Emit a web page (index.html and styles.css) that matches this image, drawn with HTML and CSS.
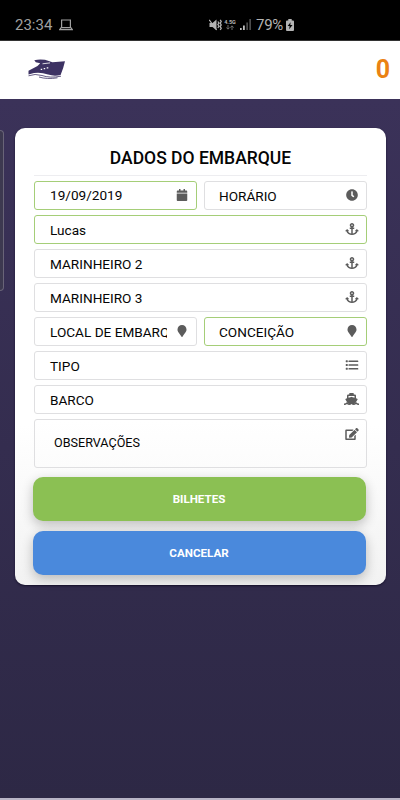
FILE: index.html
```html
<!DOCTYPE html>
<html lang="pt-BR">
<head>
<meta charset="utf-8">
<title>Dados do embarque</title>
<meta name="viewport" content="width=device-width">
<link rel="stylesheet" href="styles.css">
</head>
<body>
<svg class="defs" aria-hidden="true">
  <symbol id="calendar" viewBox="0 0 448 512"><path d="M12 192h424c6.600 0 12 5.400 12 12v260c0 26.500-21.500 48-48 48H48c-26.500 0-48-21.500-48-48V204c0-6.600 5.400-12 12-12zm436-44v-36c0-26.500-21.500-48-48-48h-48V12c0-6.600-5.400-12-12-12h-40c-6.600 0-12 5.400-12 12v52H160V12c0-6.600-5.400-12-12-12h-40c-6.600 0-12 5.400-12 12v52H48C21.500 64 0 85.500 0 112v36c0 6.600 5.400 12 12 12h424c6.600 0 12-5.400 12-12z"/></symbol>
  <symbol id="clock" viewBox="0 0 512 512"><path d="M256,8C119,8,8,119,8,256S119,504,256,504,504,393,504,256,393,8,256,8Zm92.490,313h0l-20,25a16,16,0,0,1-22.490,2.500h0l-67-49.720a40,40,0,0,1-15-31.230V112a16,16,0,0,1,16-16h32a16,16,0,0,1,16,16V256l58,42.500A16,16,0,0,1,348.490,321Z"/></symbol>
  <symbol id="anchor" viewBox="0 0 576 512"><path d="M12.971 352h32.394C67.172 454.735 181.944 512 288 512c106.229 0 220.853-57.380 242.635-160h32.394c10.691 0 16.045-12.926 8.485-20.485l-67.029-67.029c-4.686-4.686-12.284-4.686-16.971 0l-67.029 67.029c-7.560 7.560-2.206 20.485 8.485 20.485h35.146c-20.290 54.317-84.963 86.588-144.117 94.015V256h52c6.627 0 12-5.373 12-12v-40c0-6.627-5.373-12-12-12h-52v-5.470c37.281-13.226 63.989-48.771 63.989-90.530C384 43.023 341.123.1 288.200.001 235.098-.098 192 42.921 192 96.001c0 41.757 26.718 77.302 64 90.529V192h-52c-6.627 0-12 5.373-12 12v40c0 6.627 5.373 12 12 12h52v190.015c-58.936-7.399-123.820-39.679-144.117-94.015h35.146c10.691 0 16.045-12.926 8.485-20.485l-67.029-67.029c-4.686-4.686-12.284-4.686-16.971 0L4.485 331.515C-3.074 339.074 2.280 352 12.971 352zM288 64c17.645 0 32 14.355 32 32s-14.355 32-32 32-32-14.355-32-32 14.355-32 32-32z"/></symbol>
  <symbol id="marker" viewBox="0 0 384 512"><path d="M172.268 501.670C26.970 291.031 0 269.413 0 192 0 85.961 85.961 0 192 0s192 85.961 192 192c0 77.413-26.970 99.031-172.268 309.670-9.535 13.774-29.930 13.773-39.464 0z"/></symbol>
  <symbol id="list" viewBox="0 0 576 512"><path d="M36 56h56q16 0 16 16v48q0 16-16 16H36q-16 0-16-16V72q0-16 16-16zm0 160h56q16 0 16 16v48q0 16-16 16H36q-16 0-16-16v-48q0-16 16-16zm0 160h56q16 0 16 16v48q0 16-16 16H36q-16 0-16-16v-48q0-16 16-16zM154 64h386q16 0 16 16v32q0 16-16 16H154q-16 0-16-16V80q0-16 16-16zm0 160h386q16 0 16 16v32q0 16-16 16H154q-16 0-16-16v-32q0-16 16-16zm0 160h386q16 0 16 16v32q0 16-16 16H154q-16 0-16-16v-32q0-16 16-16z"/></symbol>
  <symbol id="ship" viewBox="0 0 640 512"><path fill-rule="evenodd" d="M224 24q0-24 24-24h144q24 0 24 24v40h48q48 0 48 48v112l52 17q35 15 10 48L480 440q-80 50-160 30-80 20-160-30L66 289q-25-33 10-48l52-17V112q0-48 48-48h48zM192 128v76l114-38q14-4 28 0l114 38v-76z"/><path d="M0 448h16c38 0 69-17 91-44 10-12 31-11 40 1 44 57 124 57 161 1 8-9 18-9 26 0 38 56 117 56 161-1 9-12 30-13 40-1 22 27 53 44 89 44h16v64h-16c-48 0-83-17-109-38-58 49-133 49-195 0-62 49-137 49-195 0-26 21-61 38-109 38H0z"/></symbol>
  <symbol id="edit" viewBox="0 0 576 512"><path d="M402.600 83.200l90.200 90.200c3.800 3.800 3.800 10 0 13.800L274.400 405.600l-92.800 10.300c-12.400 1.400-22.900-9.100-21.500-21.500l10.300-92.800L388.800 83.200c3.800-3.800 10-3.800 13.800 0zm162-22.900l-48.800-48.800c-15.200-15.200-39.900-15.200-55.200 0l-35.400 35.400c-3.800 3.800-3.800 10 0 13.800l90.200 90.200c3.800 3.800 10 3.800 13.800 0l35.400-35.400c15.200-15.300 15.200-40 0-55.200zM384 346.200V448H64V128h229.800c3.200 0 6.200-1.300 8.500-3.500l40-40c7.600-7.600 2.200-20.500-8.500-20.500H48C21.500 64 0 85.500 0 112v352c0 26.500 21.500 48 48 48h352c26.500 0 48-21.500 48-48V306.200c0-10.700-12.900-16-20.500-8.500l-40 40c-2.200 2.300-3.500 5.300-3.500 8.500z"/></symbol>
</svg>

<div class="status">
  <span class="time">23:34</span>
  <svg class="laptop" viewBox="0 0 14 12"><path d="M2.600 8.500V1h8.800v7.500M.7 10.600h12.600l-1.500-2H2.200z" fill="none" stroke="currentColor" stroke-width="1.200"/></svg>
  <svg class="mute" viewBox="0 0 13 12"><path d="M.5 4h3L7.500.5v10.800L3.500 8H.5z" fill="currentColor"/><path d="M.2.800 7.600 11" stroke="currentColor" stroke-width="1.200"/><path d="m8.900 2.500 1 1.500-1 1.500 1 1.500-1 2M11.200.8l1 1.700-1 1.700 1 1.700-1 1.700 1 1.700-1 1.500" fill="none" stroke="currentColor" stroke-width="1.300"/></svg>
  <span class="net"><b>4.5G</b>
    <svg class="updown" viewBox="0 0 8 5"><path d="M2 0v4M.4 2.500 2 4.200l1.600-1.700M6 5V1M4.400 2.600 6 .8l1.600 1.800" fill="none" stroke="currentColor" stroke-width=".9"/></svg>
  </span>
  <svg class="signal" viewBox="0 0 12 11"><path d="M0 9h1.700v2H0zM3 6.500h1.800V11H3z" fill="#c0c0c0"/><path d="M6.300 3.500H8V11H6.300zM9.300 0H11v11H9.300z" fill="#4c4c4c"/></svg>
  <span class="percent">79%</span>
  <svg class="battery" viewBox="0 0 8 12"><path d="M2.300 0h3.400v1.500H7q1 0 1 1V11q0 1-1 1H1q-1 0-1-1V2.500q0-1 1-1h1.300z" fill="currentColor"/><path d="M4.600 3.200 1.600 7h2L3.200 10.200 6.500 6H4.300z" fill="#000"/></svg>
</div>

<header class="topbar">
  <svg class="boat" viewBox="0 0 37 20"><path fill="#3d3263" d="M.5 15.500V11.800L9.500 7 12.200 4.200 7.800 3.200 6.300 1.300Q11-.2 17 .8L24.500 3.300 37 2.200Q35.500 9 32.600 16 26 17.500 20 15.500 13 13 6 14z"/><path d="M.5 16.800Q7 14.300 14 16.500 22 19.300 33 17.200M11 18Q19 20.500 29.500 18.800" fill="none" stroke="#3d3263" stroke-width=".8"/><path d="m14.500 4.800 7.500-.9" stroke="#fff" stroke-width=".8"/><path d="M12.700 10.400h1.500m1.500-.8h1.500m1.500-.8h1.600" stroke="#fff" stroke-width="1.300"/></svg>
  <span class="count">0</span>
</header>

<main class="screen">
  <div class="edge-handle"></div>
  <section class="card">
    <h1>DADOS DO EMBARQUE</h1>
    <div class="form">
      <div class="field valid date"><span>19/09/2019</span><svg><use href="#calendar"/></svg></div>
      <div class="field right"><span>HORÁRIO</span><svg><use href="#clock"/></svg></div>
      <div class="field wide valid"><span>Lucas</span><svg><use href="#anchor"/></svg></div>
      <div class="field wide"><span>MARINHEIRO 2</span><svg><use href="#anchor"/></svg></div>
      <div class="field wide"><span>MARINHEIRO 3</span><svg><use href="#anchor"/></svg></div>
      <div class="field"><span class="clip">LOCAL DE EMBARQ</span><svg><use href="#marker"/></svg></div>
      <div class="field valid right"><span>CONCEIÇÃO</span><svg><use href="#marker"/></svg></div>
      <div class="field wide"><span>TIPO</span><svg><use href="#list"/></svg></div>
      <div class="field wide"><span>BARCO</span><svg class="ship"><use href="#ship"/></svg></div>
      <div class="field wide notes"><span>OBSERVAÇÕES</span><svg><use href="#edit"/></svg></div>
    </div>
    <div class="actions">
      <button class="green">BILHETES</button>
      <button class="blue">CANCELAR</button>
    </div>
  </section>
</main>
</body>
</html>
```
FILE: styles.css
```css
* { box-sizing: border-box; }

body {
  margin: 0;
  height: 800px;
  display: flex;
  flex-direction: column;
  overflow: hidden;
  font-family: Roboto, "Liberation Sans", sans-serif;
  color: #050505;
  background: #000;
}

.defs { position: absolute; width: 0; height: 0; }

.status {
  height: 41px;
  flex: none;
  display: flex;
  align-items: center;
  padding: 9px 0 0 15px;
  color: #b4b4b4;
  font-size: 15px;
  line-height: 18px;
  border-bottom: 1px solid #333;
}
.time { width: 38px; color: #a0a0a0; }
.laptop { width: 14px; height: 12px; margin-left: 6px; color: #a0a0a0; }
.mute { width: 13px; height: 12px; margin-left: 136px; }
.net {
  width: 12px;
  margin-left: 2px;
  display: flex;
  flex-direction: column;
  align-items: center;
  font-size: 5.500px;
  line-height: 6px;
}
.updown { width: 8px; height: 5px; color: #777; }
.signal { width: 12px; height: 11px; margin-left: 4px; }
.percent { width: 28px; margin-left: 4px; font-size: 15px; letter-spacing: -.3px; }
.battery { width: 8px; height: 12px; margin-left: 2px; }

.topbar {
  height: 58px;
  flex: none;
  display: flex;
  align-items: center;
  justify-content: space-between;
  padding: 0 10px 0 28px;
  background: #fff;
}
.boat { width: 37px; height: 20px; margin-top: -3px; }
.count {
  font-size: 25px;
  line-height: 30px;
  font-weight: 700;
  color: #ea8213;
  margin-top: -1px;
}

.screen {
  flex: 1;
  display: flex;
  align-items: flex-start;
  padding-top: 29px;
  background: linear-gradient(#3b3259, #2d2845);
  border-bottom: 2px solid #b9b5c6;
}
.edge-handle {
  width: 4px;
  height: 161px;
  margin: 2px 11px 0 0;
  background: #3d3950;
  border: 1px solid #696478;
  border-left: 0;
  border-radius: 0 4px 4px 0;
}

.card {
  width: 371px;
  height: 457px;
  padding: 17px 19px 0;
  border-radius: 10px;
  background: linear-gradient(#fff 65%, #f2f2f2);
  box-shadow: 0 1px 2px #15102a;
}
h1 {
  margin: 0 0 5px;
  height: 31px;
  padding-top: 3px;
  font-size: 17.500px;
  line-height: 21px;
  font-weight: 500;
  text-align: center;
  border-bottom: 1px solid #ededf0;
}

.form {
  display: grid;
  grid-template-columns: 163px 163px;
  grid-auto-rows: 29px;
  gap: 5px 7px;
}
.field {
  display: flex;
  align-items: center;
  justify-content: space-between;
  padding: 0 7px 0 15px;
  border: 1px solid #dfdfe1;
  border-radius: 3px;
  background: #fff;
  font-size: 13.600px;
  line-height: 18px;
}
.field.right { padding-left: 14px; }
.field.wide { grid-column: 1 / -1; }
.field.valid { border-color: #a5ce78; }
.field span { white-space: nowrap; }
.field .clip { width: 117px; overflow: hidden; }
.field svg { width: 14px; height: 12px; flex: none; margin-top: -1px; fill: #5c5c5c; }
.field .ship { width: 15px; }
.date span { margin-top: -2px; }
.field.notes {
  height: 49px;
  padding: 0 7px 0 19px;
  align-items: flex-start;
  font-size: 12.600px;
  background: linear-gradient(#fff, #fcfcfc);
}
.notes span { margin-top: 14px; }
.notes svg { margin-top: 8px; }

.actions {
  display: grid;
  gap: 10px;
  margin: 29px -1px 0;
}
button {
  width: 333px;
  height: 44px;
  padding: 0 1px 0 0;
  border: 0;
  border-radius: 10px;
  color: #fff;
  font: 700 11.600px/16px Roboto, sans-serif;
  box-shadow: 0 4px 12px rgba(0, 0, 0, .24);
}
.green { background: #8bc053; }
.blue { background: #4a89dc; }
```
